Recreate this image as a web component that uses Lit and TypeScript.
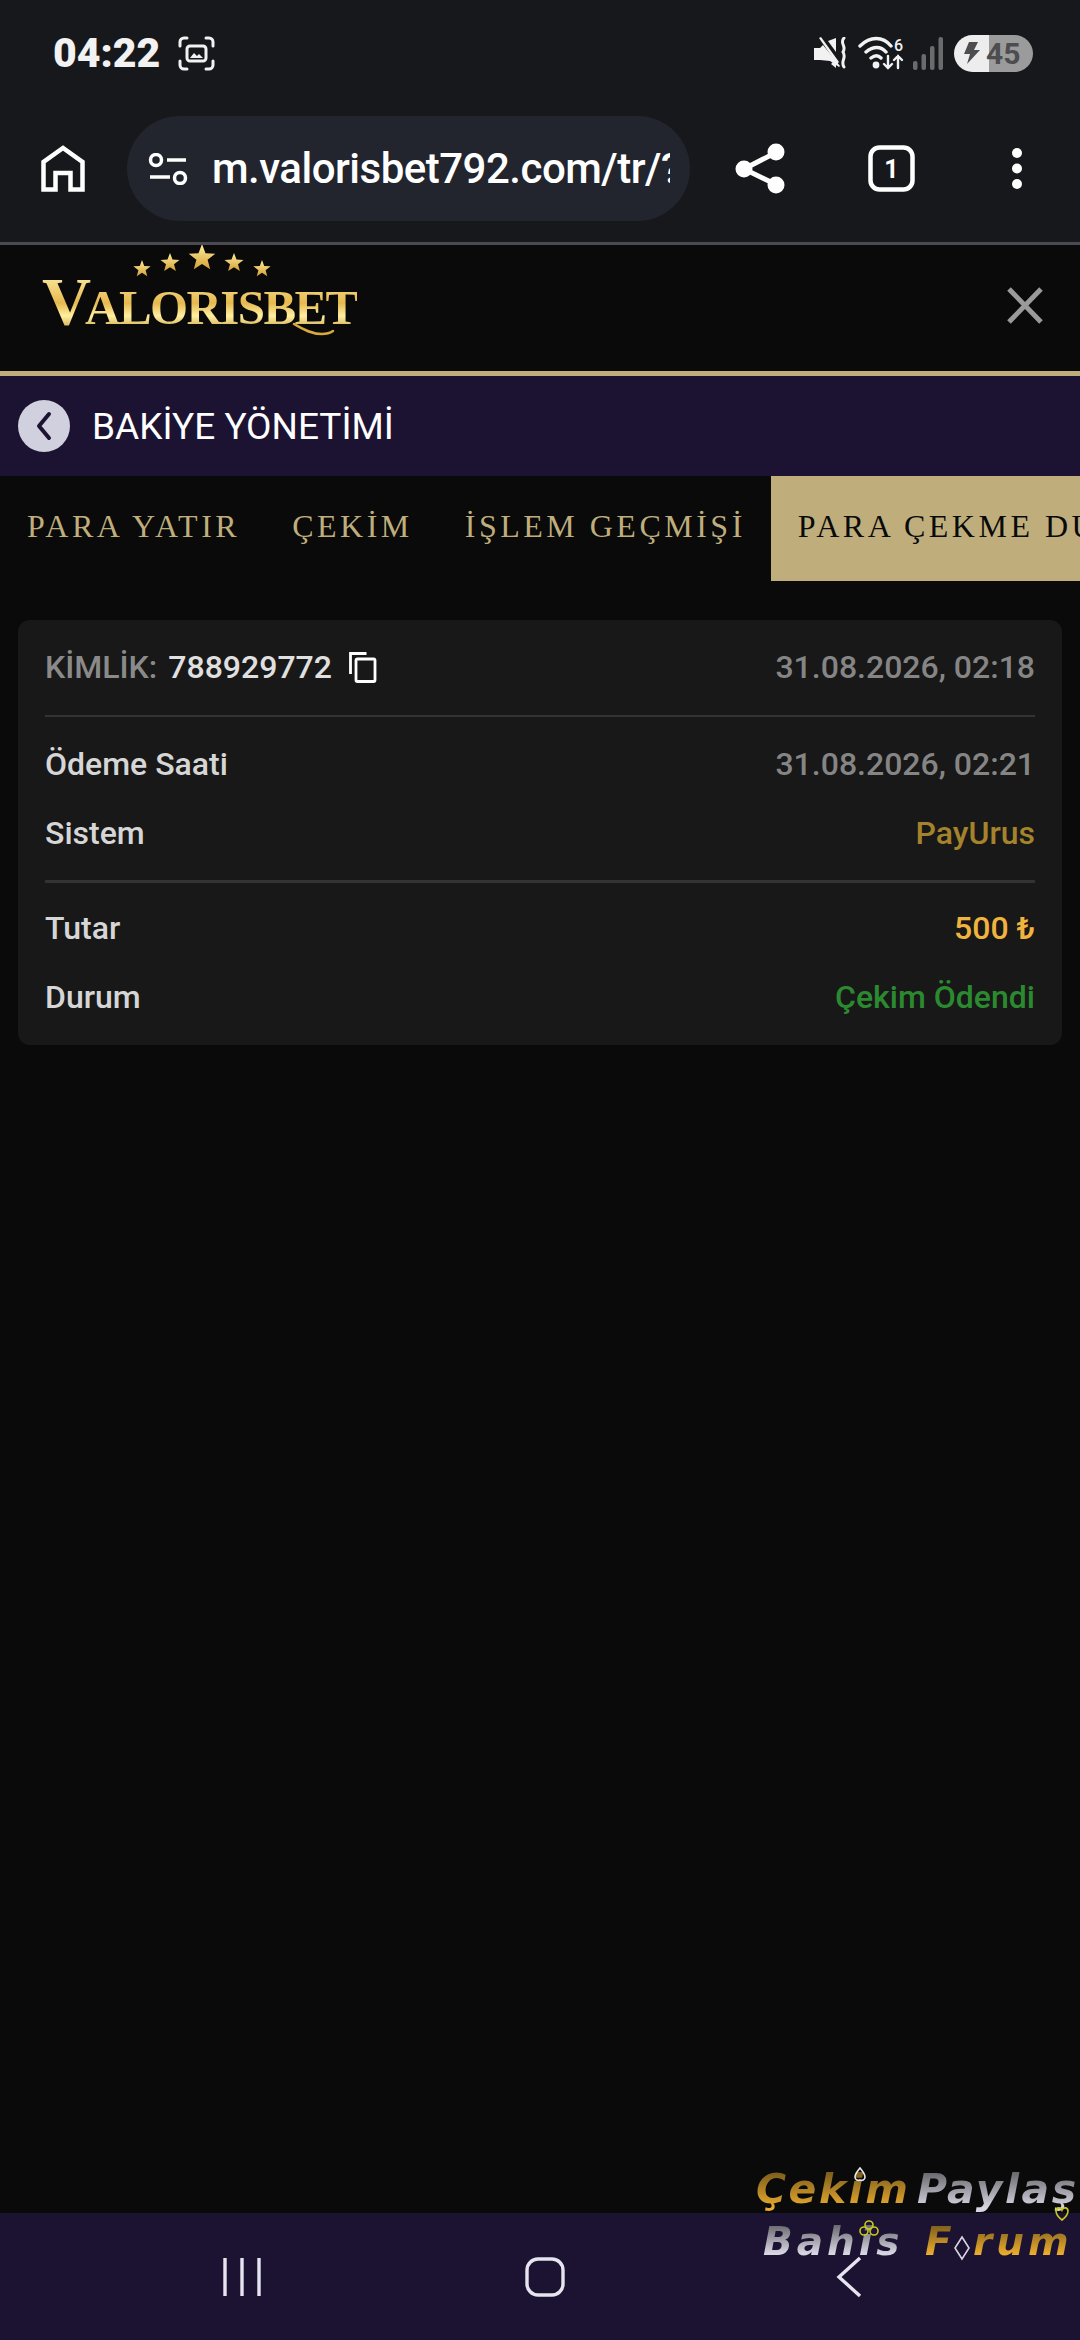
import { LitElement, html, css, svg } from 'lit';
import { customElement } from 'lit/decorators.js';

const star = (cx: number, cy: number, r: number) => {
  const pts: string[] = [];
  for (let i = 0; i < 10; i++) {
    const rad = i % 2 ? r * 0.42 : r;
    const a = (Math.PI / 5) * i - Math.PI / 2;
    pts.push(`${(cx + rad * Math.cos(a)).toFixed(1)},${(cy + rad * Math.sin(a)).toFixed(1)}`);
  }
  return svg`<polygon points=${pts.join(' ')} fill="url(#gold)" />`;
};

const rows = [
  { label: 'Ödeme Saati', value: '31.08.2026, 02:21', tone: 'muted' },
  { label: 'Sistem', value: 'PayUrus', tone: 'system' },
];
const rows2 = [
  { label: 'Tutar', value: '500 ₺', tone: 'amount' },
  { label: 'Durum', value: 'Çekim Ödendi', tone: 'paid' },
];

@customElement('app-root')
export class AppRoot extends LitElement {
  static styles = css`
    :host {
      display: flex;
      flex-direction: column;
      position: relative;
      width: 1080px;
      height: 2340px;
      overflow: hidden;
      background: #0a0a0a;
      font-family: Roboto, "Noto Sans", sans-serif;
    }
    svg { display: block; flex: none; }

    .chrome {
      height: 242px;
      background: #17181b;
      border-bottom: 3px solid #4a4b50;
      color: #fff;
    }
    .status {
      display: flex;
      align-items: center;
      height: 106px;
      padding: 0 47px 0 53px;
    }
    .time {
      font-size: 41px;
      font-weight: 900;
      color: #f2f2f2;
      width: 125px;
    }
    .status-right {
      display: flex;
      align-items: center;
      margin-left: auto;
    }
    .battery {
      display: flex;
      align-items: center;
      position: relative;
      width: 79px;
      height: 37px;
      margin-left: 11px;
      border-radius: 19px;
      overflow: hidden;
      background: linear-gradient(90deg, #ededee 0 35px, #9b9b9c 35px);
      color: #4d4d4f;
      font-size: 30px;
      font-weight: 700;
    }
    .battery span { margin-left: 6px; }
    .battery svg { margin-left: 9px; }

    .browser {
      display: flex;
      align-items: center;
      height: 105px;
      margin-top: 10px;
      padding-left: 41px;
    }
    .pill {
      display: flex;
      align-items: center;
      width: 563px;
      height: 105px;
      margin-left: 42px;
      padding-left: 21px;
      box-sizing: border-box;
      border-radius: 53px;
      background: #22252e;
    }
    .url {
      width: 458px;
      margin-left: 24px;
      overflow: hidden;
      white-space: nowrap;
      font-size: 42px;
      font-weight: 500;
      letter-spacing: -0.5px;
      color: #fff;
    }
    .share { margin-left: 45px; }
    .tab-count { margin-left: 83px; }
    .dots { margin-left: 97px; }

    .site-head {
      display: flex;
      align-items: flex-start;
      justify-content: space-between;
      height: 126px;
      padding: 0 37px 0 42px;
      background: #0a0a0a;
      border-bottom: 5px solid #bfae7c;
    }
    .logo { position: relative; width: 320px; height: 126px; }
    .logo svg { position: absolute; left: 0; top: 0; }
    .logo-text {
      position: absolute;
      left: 0;
      top: 24px;
      white-space: nowrap;
      font-family: "Liberation Serif", serif;
      font-weight: 700;
      font-size: 49px;
      line-height: 64px;
      letter-spacing: -1.6px;
      background: linear-gradient(180deg, #fff3b0 0%, #e6b94e 48%, #fff0a0 66%, #b98a28 92%);
      -webkit-background-clip: text;
      background-clip: text;
      color: transparent;
    }
    .logo-text b { font-size: 68px; font-weight: 700; letter-spacing: -6px; }
    .close { margin-top: 42px; }

    .band {
      display: flex;
      align-items: center;
      height: 100px;
      padding-left: 18px;
      background: #1c1333;
    }
    .back {
      display: flex;
      align-items: center;
      justify-content: center;
      width: 52px;
      height: 52px;
      border-radius: 50%;
      background: #d1d0de;
    }
    .band-title {
      margin-left: 22px;
      font-size: 37px;
      color: #fff;
    }

    .tabs {
      display: flex;
      height: 105px;
      white-space: nowrap;
      overflow: hidden;
    }
    .tab {
      display: flex;
      flex: none;
      align-items: center;
      padding: 0 25px 5px 27px;
      font-family: "Liberation Serif", serif;
      font-size: 32px;
      letter-spacing: 3.5px;
      color: #bfae7c;
    }
    .tab.active {
      background: #bfae7c;
      color: #0a0a0a;
    }

    .card {
      display: flex;
      flex-direction: column;
      height: 425px;
      box-sizing: border-box;
      margin: 39px 18px 0;
      padding: 0 27px;
      border-radius: 12px;
      background: #181818;
      font-size: 32px;
      font-weight: 500;
      color: #d6d6d6;
    }
    .row {
      display: flex;
      flex: none;
      align-items: center;
      justify-content: space-between;
      height: 69px;
    }
    .head-row { height: 94px; margin-bottom: 1px; }
    .id { display: flex; align-items: center; }
    .id-label { color: #8a8a8a; margin-right: 11px; }
    .id-num { color: #e0e0e0; }
    .id svg { margin-left: 17px; }
    .rule { height: 2px; background: #333; flex: none; }
    .rule.thick { height: 3px; }
    .group { padding: 12px 0 13px; flex: none; }
    .group.last { padding: 10px 0 0; }
    .muted { color: #858585; }
    .system { color: #a5832c; }
    .amount { color: #f0b43e; }
    .paid { color: #2b8a2f; }

    .spacer { flex: 1; }
    .nav {
      display: flex;
      align-items: center;
      height: 127px;
      background: #1c1333;
      padding-left: 222px;
    }
    .nav .home-btn { margin-left: 263px; }
    .nav .back-btn { margin-left: 271px; }

    .mark {
      position: absolute;
      left: 0;
      top: 0;
      pointer-events: none;
      font-family: "DejaVu Sans", sans-serif;
      font-style: italic;
      font-weight: 700;
      white-space: nowrap;
      line-height: 1;
    }
    .mark span {
      position: absolute;
      padding-right: 8px;
      -webkit-background-clip: text;
      background-clip: text;
      color: transparent;
    }
    .amber { background-image: linear-gradient(180deg, #7a5c1c 5%, #f0b030 80%); }
    .silver { background-image: linear-gradient(180deg, #66666b 5%, #d8d6e2 75%); }
    .w1 { font-size: 41px; letter-spacing: 2.5px; top: 2169px; height: 52px; }
    .w2 { font-size: 39px; letter-spacing: 4px; top: 2222px; height: 42px; }
    .suits { position: absolute; left: 0; top: 0; }
  `;

  render() {
    return html`
      <div class="chrome">
        <div class="status">
          <div class="time">04:22</div>
          <svg width="37" height="35" viewBox="0 0 37 35" fill="none" stroke="#f2f2f2" stroke-width="3" stroke-linecap="round">
            <path d="M2 10V6a4 4 0 0 1 4-4h3M28 2h3a4 4 0 0 1 4 4v4M35 25v4a4 4 0 0 1-4 4h-3M9 33H6a4 4 0 0 1-4-4v-4" />
            <rect x="9" y="10" width="19" height="15" rx="3" />
            <path d="M12 22l4-5 3 3 2-2 4 4z" fill="#f2f2f2" stroke="none" />
          </svg>
          <div class="status-right">
            <svg width="35" height="32" viewBox="0 0 35 32" fill="#f2f2f2">
              <path d="M0 11h6l3-3 17 21-1 1-9-6-10-1H0z" />
              <path d="M5 1l2-1 18 25-2 2z" />
              <path d="M14 4l8-3v14zM22 22v9l-5-4z" />
              <path d="M30 1c-5 5 3 8-1 14 4 6-3 9 1 15" fill="none" stroke="#f2f2f2" stroke-width="3" stroke-linecap="round" />
            </svg>
            <svg style="margin-left:9px" width="47" height="34" viewBox="0 0 47 34" fill="none" stroke="#f2f2f2" stroke-width="3.4" stroke-linecap="round">
              <path d="M2 10c10-10 23-10 31 0M8 16c7-6 15-6 20 0M13 22c4-3 7-3 10 0" />
              <circle cx="18" cy="29" r="3.4" fill="#f2f2f2" stroke="none" />
              <path d="M30 20v12M26 28l4 4 4-4M40 32V20M36 24l4-4 4 4" stroke-width="2.4" />
              <text x="36" y="15" font-family="Roboto" font-size="16" font-weight="500" fill="#f2f2f2" stroke="none">6</text>
            </svg>
            <svg style="margin-left:8px" width="30" height="33" viewBox="0 0 30 33" fill="#6b6b6d">
              <rect x="0" y="24" width="4.5" height="9" rx="2" />
              <rect x="8.5" y="17" width="4.5" height="16" rx="2" />
              <rect x="17" y="9" width="4.5" height="24" rx="2" />
              <rect x="25.5" y="0" width="4.5" height="33" rx="2" />
            </svg>
            <div class="battery">
              <svg width="17" height="22" viewBox="0 0 17 22" fill="#4d4d4f"><path d="M6 0h9l-4 8h6L4 22l3-10H1z" /></svg>
              <span>45</span>
            </div>
          </div>
        </div>
        <div class="browser">
          <svg width="44" height="47" viewBox="0 0 44 47" fill="none" stroke="#fff" stroke-width="4.5">
            <path d="M2.5 44.5V17L22 3l19.5 14v27.5H29.5V28h-15v16.5z" />
          </svg>
          <div class="pill">
            <svg width="40" height="32" viewBox="0 0 40 32" fill="none" stroke="#fff" stroke-width="3.5">
              <circle cx="8" cy="7" r="5.5" />
              <path d="M19 7h19M2 24h20" />
              <circle cx="32" cy="25" r="5.5" />
            </svg>
            <div class="url">m.valorisbet792.com/tr/?</div>
          </div>
          <svg class="share" width="50" height="51" viewBox="0 0 50 51" fill="#fff" stroke="#fff">
            <path d="M40 10L9 26l31 15" fill="none" stroke-width="5" />
            <circle cx="41" cy="9" r="8.5" stroke="none" />
            <circle cx="9" cy="26" r="8.5" stroke="none" />
            <circle cx="41" cy="42" r="8.5" stroke="none" />
          </svg>
          <svg class="tab-count" width="47" height="47" viewBox="0 0 47 47" fill="none">
            <rect x="2.5" y="2.5" width="42" height="42" rx="9" stroke="#fff" stroke-width="4.5" />
            <text x="23.5" y="33" text-anchor="middle" font-family="Roboto" font-size="25" font-weight="700" fill="#fff">1</text>
          </svg>
          <svg class="dots" width="10" height="41" viewBox="0 0 10 41" fill="#fff">
            <circle cx="5" cy="5" r="5" /><circle cx="5" cy="20.5" r="5" /><circle cx="5" cy="36" r="5" />
          </svg>
        </div>
      </div>

      <div class="site-head">
        <div class="logo">
          <svg width="320" height="100" viewBox="0 0 320 100">
            <defs>
              <linearGradient id="gold" x1="0" y1="0" x2="0" y2="1">
                <stop offset="0" stop-color="#fff0a0" />
                <stop offset="1" stop-color="#d49f33" />
              </linearGradient>
            </defs>
            ${star(100, 24, 9)}${star(128, 18, 10)}${star(160, 13, 14)}${star(192, 18, 10)}${star(220, 24, 9)}
            <path d="M252 79c10 6 18 10 28 10 5 0 8-1 11-3" fill="none" stroke="#d9a93c" stroke-width="2.5" stroke-linecap="round" />
          </svg>
          <div class="logo-text"><b>V</b>ALORISBET</div>
        </div>
        <svg class="close" width="36" height="37" viewBox="0 0 36 37" stroke="#9a9a9a" stroke-width="5">
          <path d="M2 2l32 33M34 2L2 35" />
        </svg>
      </div>

      <div class="band">
        <div class="back">
          <svg width="20" height="30" viewBox="0 0 20 30" fill="none" stroke="#1c1333" stroke-width="4" stroke-linecap="round" stroke-linejoin="round">
            <path d="M15 3L5 15l10 12" />
          </svg>
        </div>
        <div class="band-title">BAKİYE YÖNETİMİ</div>
      </div>

      <div class="tabs">
        <div class="tab">PARA YATIR</div>
        <div class="tab">ÇEKİM</div>
        <div class="tab">İŞLEM GEÇMİŞİ</div>
        <div class="tab active">PARA ÇEKME DURUMU</div>
      </div>

      <div class="card">
        <div class="row head-row">
          <div class="id">
            <span class="id-label">KİMLİK:</span>
            <span class="id-num">788929772</span>
            <svg width="28" height="31" viewBox="0 0 28 31" fill="none" stroke="#fff" stroke-width="2.8">
              <path d="M1.5 22V1.5h16" />
              <rect x="7" y="7" width="19" height="22.5" rx="1.5" />
            </svg>
          </div>
          <span class="muted">31.08.2026, 02:18</span>
        </div>
        <div class="rule"></div>
        <div class="group">
          ${rows.map(r => html`<div class="row"><span>${r.label}</span><span class=${r.tone}>${r.value}</span></div>`)}
        </div>
        <div class="rule thick"></div>
        <div class="group last">
          ${rows2.map(r => html`<div class="row"><span>${r.label}</span><span class=${r.tone}>${r.value}</span></div>`)}
        </div>
      </div>

      <div class="spacer"></div>

      <div class="nav">
        <svg width="40" height="38" viewBox="0 0 40 38" stroke="#e6e4ee" stroke-width="3.4">
          <path d="M3 0v38M20 0v38M37 0v38" />
        </svg>
        <svg class="home-btn" width="40" height="40" viewBox="0 0 40 40" fill="none" stroke="#e6e4ee" stroke-width="3.4">
          <rect x="2" y="2" width="36" height="36" rx="11" />
        </svg>
        <svg class="back-btn" width="26" height="42" viewBox="0 0 26 42" fill="none" stroke="#e6e4ee" stroke-width="3.4">
          <path d="M24 2L3 21l21 19" />
        </svg>
      </div>

      <div class="mark">
        <span class="w1 amber" style="left:756px">Çekim</span>
        <span class="w1 silver" style="left:917px">Paylaş</span>
        <span class="w2 silver" style="left:763px">Bahis</span>
        <span class="w2 amber" style="left:925px">F</span>
        <span class="w2 amber" style="left:973px">rum</span>
        <svg class="suits" width="1080" height="2340" viewBox="0 0 1080 2340" fill="none" stroke-width="1.6">
          <path d="M860 2168c-3 4-5 6-5 9 0 3 3 4 5 3 2 1 5 0 5-3 0-3-2-5-5-9z" stroke="#e8e8e8" />
          <path d="M1062 2220c-4-3-6-6-6-9 0-4 5-4 6-1 1-3 6-3 6 1 0 3-2 6-6 9z" stroke="#c8c820" />
          <circle cx="869" cy="2225" r="4" stroke="#c8c820" />
          <circle cx="864" cy="2231" r="4" stroke="#c8c820" />
          <circle cx="874" cy="2231" r="4" stroke="#c8c820" />
          <path d="M962 2237l7 11-7 11-7-11z" stroke="#d8d6e2" />
        </svg>
      </div>
    `;
  }
}
